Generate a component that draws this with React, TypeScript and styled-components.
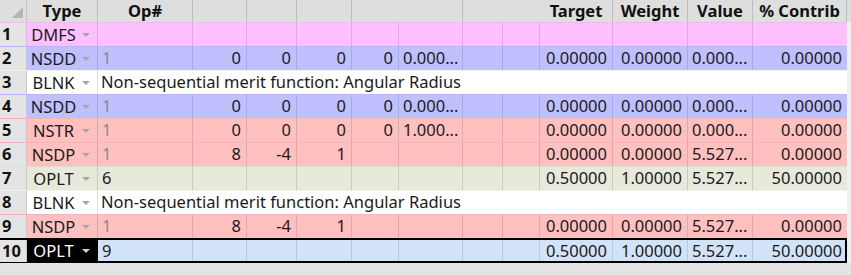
import styled, { createGlobalStyle } from "styled-components";

const GlobalStyle = createGlobalStyle`
  html, body {
    margin: 0;
    padding: 0;
    background: #e6e6e6;
    font-family: "Noto Sans", "Open Sans", sans-serif;
  }
`;

// column widths measured from the editor
const COLS = "27px 71px 95px 54px 50px 55px 47px 64px 40px 37px 73px 75px 65px 94px";

type Cell = { v?: string; muted?: boolean; left?: boolean };
type RowData = {
  n: number;
  type: string;
  bg: string;
  cells?: Cell[];
  comment?: string;
  selected?: boolean;
};

const nsdd = (last: string): Cell[] => [
  { v: "1", muted: true, left: true },
  { v: "0" },
  { v: "0" },
  { v: "0" },
  { v: "0" },
  { v: last, left: true },
  {},
  {},
];

const nsdp: Cell[] = [
  { v: "1", muted: true, left: true },
  { v: "8" },
  { v: "-4" },
  { v: "1" },
  {},
  {},
  {},
  {},
];

const oplt = (op: string): Cell[] => [{ v: op, left: true }, {}, {}, {}, {}, {}, {}, {}];

const tail = (t: string, w: string, val: string, c: string): Cell[] => [
  { v: t },
  { v: w },
  { v: val, left: true },
  { v: c },
];

const COMMENT = "Non-sequential merit function: Angular Radius";

const rows: RowData[] = [
  { n: 1, type: "DMFS", bg: "#ffc0ff", cells: [...oplt(""), {}, {}, {}, {}] },
  { n: 2, type: "NSDD", bg: "#c0c0ff", cells: [...nsdd("0.000..."), ...tail("0.00000", "0.00000", "0.000...", "0.00000")] },
  { n: 3, type: "BLNK", bg: "#ffffff", comment: COMMENT },
  { n: 4, type: "NSDD", bg: "#c0c0ff", cells: [...nsdd("0.000..."), ...tail("0.00000", "0.00000", "0.000...", "0.00000")] },
  { n: 5, type: "NSTR", bg: "#ffc0c0", cells: [...nsdd("1.000..."), ...tail("0.00000", "0.00000", "0.000...", "0.00000")] },
  { n: 6, type: "NSDP", bg: "#ffc0c0", cells: [...nsdp, ...tail("0.00000", "0.00000", "5.527...", "0.00000")] },
  { n: 7, type: "OPLT", bg: "#e7e9da", cells: [...oplt("6"), ...tail("0.50000", "1.00000", "5.527...", "50.00000")] },
  { n: 8, type: "BLNK", bg: "#ffffff", comment: COMMENT },
  { n: 9, type: "NSDP", bg: "#ffc0c0", cells: [...nsdp, ...tail("0.00000", "0.00000", "5.527...", "0.00000")] },
  {
    n: 10,
    type: "OPLT",
    bg: "#d3e3f7",
    selected: true,
    cells: [...oplt("9"), ...tail("0.50000", "1.00000", "5.527...", "50.00000")],
  },
];

const headers: { label: string; line: boolean }[] = [
  { label: "Type", line: true },
  { label: "Op#", line: true },
  { label: "", line: true },
  { label: "", line: true },
  { label: "", line: true },
  { label: "", line: false },
  { label: "", line: true },
  { label: "", line: false },
  { label: "", line: false },
  { label: "Target", line: true },
  { label: "Weight", line: true },
  { label: "Value", line: true },
  { label: "% Contrib", line: true },
];

export default function App() {
  return (
    <>
      <GlobalStyle />
      <Editor>
        <HeaderBar>
          <HeaderGrid>
            <Corner>
              <svg width="27" height="22" viewBox="0 0 27 22">
                <polygon points="12,18 23,7 23,18" fill="#b4b4b4" />
              </svg>
            </Corner>
            {headers.map((h, i) => (
              <HeadCell key={i} $line={h.line}>
                {h.label}
              </HeadCell>
            ))}
          </HeaderGrid>
        </HeaderBar>
        <Body>
          {rows.map((r) => (
            <Row key={r.n} $bg={r.bg} $selected={!!r.selected}>
              <RowNum>{r.n}</RowNum>
              <TypeCell $selected={!!r.selected}>
                <TypeLabel>{r.type}</TypeLabel>
                <Caret width="8" height="4" viewBox="0 0 8 4">
                  <polygon points="0,0 8,0 4,4" fill={r.selected ? "#d0d0d0" : "#a6a6a6"} />
                </Caret>
              </TypeCell>
              {r.comment ? (
                <Comment>{r.comment}</Comment>
              ) : (
                r.cells!.map((c, i) => (
                  <DataCell key={i} $muted={!!c.muted} $left={!!c.left} $last={i === r.cells!.length - 1}>
                    {c.v}
                  </DataCell>
                ))
              )}
            </Row>
          ))}
        </Body>
        <Filler />
      </Editor>
    </>
  );
}

const Editor = styled.div`
  width: 851px;
  height: 275px;
  display: flex;
  flex-direction: column;
  overflow: hidden;
  background: #f0f0f0;
`;

const HeaderBar = styled.div`
  height: 22px;
  background: #dedede;
  flex: none;
`;

const HeaderGrid = styled.div`
  display: grid;
  grid-template-columns: ${COLS};
  height: 22px;
`;

const Corner = styled.div`
  border-right: 1px solid #c4c4c4;
  svg {
    display: block;
  }
`;

const HeadCell = styled.div<{ $line: boolean }>`
  border-right: 1px solid ${(p) => (p.$line ? "#bdbdbd" : "transparent")};
  font-weight: 700;
  font-size: 16.5px;
  line-height: 22px;
  color: #111;
  text-align: center;
  white-space: nowrap;
`;

const Body = styled.div`
  display: flex;
  flex-direction: column;
  width: 847px;
  flex: none;
`;

const Row = styled.div<{ $bg: string; $selected: boolean }>`
  display: grid;
  grid-template-columns: ${COLS};
  height: 24px;
  box-sizing: border-box;
  background: ${(p) => p.$bg};
  border-top: 1px solid ${(p) => (p.$selected ? "#000" : "rgba(0,0,0,0.05)")};
  ${(p) =>
    p.$selected &&
    `
    border-top-width: 2px;
    border-bottom: 2px solid #000;
    border-right: 2px solid #000;
    height: 25px;
  `}
  font-size: 16.5px;
  color: #1a1a1a;
`;

const RowNum = styled.div`
  background: #e4e4e4;
  font-weight: 700;
  color: #111;
  padding-left: 2px;
  line-height: 22px;
  border-right: 1px solid #c8c8c8;
`;

const TypeCell = styled.div<{ $selected: boolean }>`
  display: flex;
  align-items: center;
  padding-right: 7px;
  background: ${(p) => (p.$selected ? "#000" : "transparent")};
  color: ${(p) => (p.$selected ? "#fff" : "#1a1a1a")};
  border-right: 1px solid rgba(0, 0, 0, 0.13);
`;

const TypeLabel = styled.span`
  flex: 1;
  text-align: center;
  line-height: 22px;
`;

const Caret = styled.svg`
  flex: none;
  margin-left: 2px;
`;

const Comment = styled.div`
  grid-column: 3 / -1;
  padding-left: 3px;
  line-height: 22px;
  white-space: nowrap;
`;

const DataCell = styled.div<{ $muted: boolean; $left: boolean; $last: boolean }>`
  border-right: ${(p) => (p.$last ? "none" : "1px solid rgba(0, 0, 0, 0.12)")};
  color: ${(p) => (p.$muted ? "#8a8a8a" : "#1a1a1a")};
  text-align: ${(p) => (p.$left ? "left" : "right")};
  padding: 0 5px 0 4px;
  line-height: 22px;
  white-space: nowrap;
  overflow: hidden;
`;

const Filler = styled.div`
  flex: 1;
  background: #e4e4e4;
`;
